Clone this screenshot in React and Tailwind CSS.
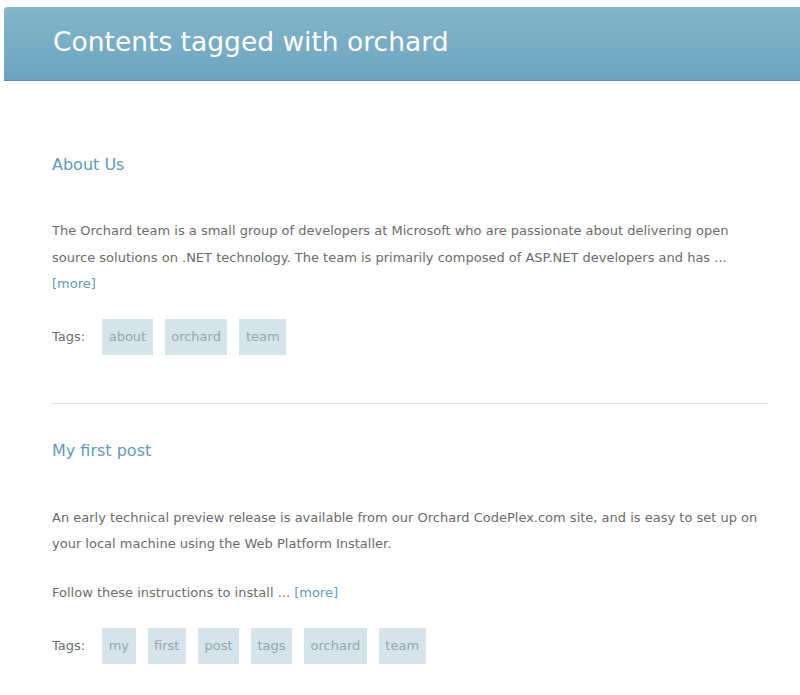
function Tag({ children }) {
  return (
    <span className="flex h-[36px] items-center bg-[#d5e3eb] px-[6.5px] text-[#9aa6ad]">{children}</span>
  );
}

function Tags({ items }) {
  return (
    <div className="flex items-center gap-3">
      <span className="pr-[5px] text-[#6b6b6b]">Tags:</span>
      {items.map((t) => (
        <Tag key={t}>{t}</Tag>
      ))}
    </div>
  );
}

function More() {
  return <a className="text-[#5e9bba]">[more]</a>;
}

export default function App() {
  return (
    <div className="min-h-[695px] bg-white pt-[7px] font-['DejaVu_Sans',sans-serif] text-[13px] text-[#6b6b6b]">
      <div className="ml-[4px] flex h-[74px] items-center rounded-tl-[4px] border-b border-[#5e91a8] bg-gradient-to-b from-[#85b6ca] to-[#6ca4bf] pb-[3px] pl-[49px]">
        <h1 className="text-[26.5px] leading-none text-white">Contents tagged with orchard</h1>
      </div>
      <div className="w-[768px] pl-[52px] pt-[71px]">
        <article>
          <h2 className="text-[16px] leading-[26px] text-[#5e9bba]">About Us</h2>
          <div className="mt-[40px] leading-[26.5px]">
            <p className="mb-[21px]">
              The Orchard team is a small group of developers at Microsoft who are passionate about delivering open source solutions on .NET technology. The team is primarily composed of ASP.NET developers and has ... <More />
            </p>
          </div>
          <Tags items={["about", "orchard", "team"]} />
        </article>
        <div className="mt-[48px] h-px bg-[#e1e1e1]" />
        <article className="pt-[34px]">
          <h2 className="text-[16px] leading-[26px] text-[#5e9bba]">My first post</h2>
          <div className="mt-[41px] leading-[26.5px]">
            <p className="mb-[22px]">
              An early technical preview release is available from our Orchard CodePlex.com site, and is easy to set up on your local machine using the Web Platform Installer.
            </p>
            <p className="mb-[22px]">
              Follow these instructions to install ... <More />
            </p>
          </div>
          <Tags items={["my", "first", "post", "tags", "orchard", "team"]} />
        </article>
      </div>
    </div>
  );
}
